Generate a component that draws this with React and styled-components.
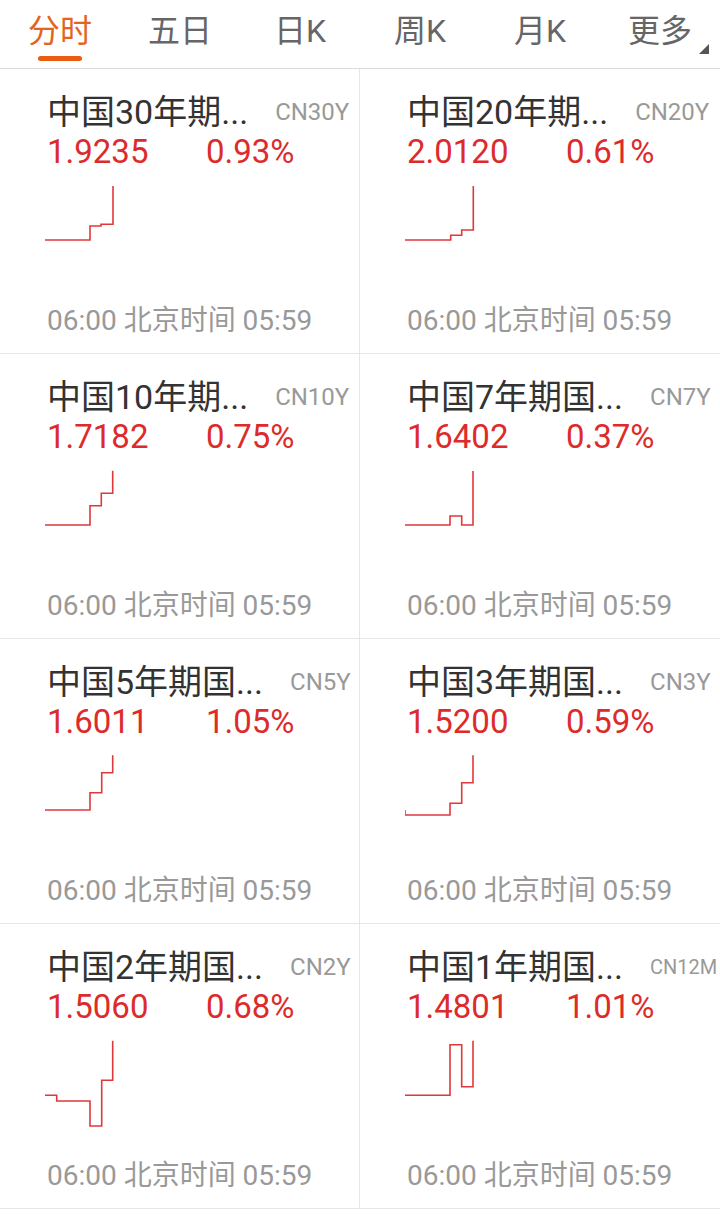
import styled, { createGlobalStyle } from 'styled-components'

const GlobalStyle = createGlobalStyle`
    body {
        margin: 0;
        background: #ffffff;
        font-family: Roboto, "Noto Sans CJK SC", sans-serif;
    }
`

const tabs = ['分时', '五日', '日K', '周K', '月K', '更多']

const bonds = [
    { name: '中国30年期...', code: 'CN30Y', price: '1.9235', pct: '0.93%', line: 'M0 61 H45 V47 H56 V45.3 H68 V7' },
    { name: '中国20年期...', code: 'CN20Y', price: '2.0120', pct: '0.61%', line: 'M0 61 H45.7 V56.3 H56.7 V51 H68.3 V7' },
    { name: '中国10年期...', code: 'CN10Y', price: '1.7182', pct: '0.75%', line: 'M0 61 H45 V41.7 H56.3 V29.3 H67.7 V6.7' },
    { name: '中国7年期国...', code: 'CN7Y', price: '1.6402', pct: '0.37%', line: 'M0 61 H45 V52 H56.7 V61 H68 V7' },
    { name: '中国5年期国...', code: 'CN5Y', price: '1.6011', pct: '1.05%', line: 'M0 61 H45 V43.7 H56.7 V23.7 H67.7 V6.3' },
    { name: '中国3年期国...', code: 'CN3Y', price: '1.5200', pct: '0.59%', line: 'M0 61 V66 H45 V54.3 H56.7 V33.7 H68 V6.3' },
    { name: '中国2年期国...', code: 'CN2Y', price: '1.5060', pct: '0.68%', line: 'M0 61.3 H11.7 V67 H45 V92 H56.7 V46.3 H67.7 V6.7' },
    { name: '中国1年期国...', code: 'CN12M', price: '1.4801', pct: '1.01%', line: 'M0 61.3 H45 V10.7 H56.7 V52.7 H68 V6.7', small: true },
]

export default function App() {

    return (
        <>
            <GlobalStyle />
            <Page>
                <TabBar>
                    {tabs.map((t, i) => (
                        <Tab key={t}>
                            <TabLabel $active={i === 0}>
                                {t}
                                {t === '更多' && <Corner />}
                            </TabLabel>
                            <Underline $active={i === 0} />
                        </Tab>
                    ))}
                </TabBar>

                <Grid>
                    {bonds.map((b, i) => (
                        <Cell key={b.code} $left={i % 2 === 0}>
                            <TitleRow>
                                <Name>{b.name}</Name>
                                <Code $small={b.small}>{b.code}</Code>
                            </TitleRow>
                            <ValueRow>
                                <Price>{b.price}</Price>
                                <Pct>{b.pct}</Pct>
                            </ValueRow>
                            <Chart width="80" height="100" viewBox="0 0 80 100">
                                <path d={b.line} />
                            </Chart>
                            <Footer>06:00 北京时间 05:59</Footer>
                        </Cell>
                    ))}
                </Grid>
            </Page>
        </>
    )
}

const Page = styled.div`
    width: 720px;
    background: #ffffff;
`

const TabBar = styled.div`
    display: flex;
    height: 68px;
    border-bottom: 1px solid #dcdcdc;
`

const Tab = styled.div`
    flex: 1;
    display: flex;
    flex-direction: column;
    align-items: center;
    padding-top: 11px;
`

const TabLabel = styled.div`
    position: relative;
    font-size: 32px;
    line-height: 40px;
    color: ${p => (p.$active ? '#e2651f' : '#666666')};
`

const Corner = styled.span`
    position: absolute;
    right: -17px;
    bottom: -3px;
    width: 0;
    height: 0;
    border-bottom: 10px solid #555555;
    border-left: 10px solid transparent;
`

const Underline = styled.div`
    width: 44px;
    height: 5px;
    margin-top: 5px;
    border-radius: 3px;
    background: ${p => (p.$active ? '#e85d10' : 'transparent')};
`

const Grid = styled.div`
    display: grid;
    grid-template-columns: 360px 360px;
`

const Cell = styled.div`
    box-sizing: border-box;
    height: 285px;
    display: flex;
    flex-direction: column;
    padding: 23px 8px 15px 47px;
    border-bottom: 1px solid #e6e6e6;
    border-right: ${p => (p.$left ? '1px solid #e6e6e6' : 'none')};
`

const TitleRow = styled.div`
    display: flex;
    align-items: center;
`

const Name = styled.div`
    font-size: 34px;
    line-height: 40px;
    color: #333333;
    white-space: nowrap;
`

const Code = styled.div`
    margin-left: 27px;
    font-size: ${p => (p.$small ? '20px' : '24px')};
    line-height: 28px;
    color: #999999;
    white-space: nowrap;
`

const ValueRow = styled.div`
    display: flex;
    font-size: 33px;
    line-height: 40px;
    color: #dd2b2b;
`

const Price = styled.div`
    width: 159px;
`

const Pct = styled.div``

const Chart = styled.svg`
    display: block;
    margin: 7px 0 0 -2px;
    fill: none;
    stroke: #e0393b;
    stroke-width: 1.6;
`

const Footer = styled.div`
    margin-top: auto;
    font-size: 28px;
    line-height: 34px;
    color: #999999;
    white-space: nowrap;
`
